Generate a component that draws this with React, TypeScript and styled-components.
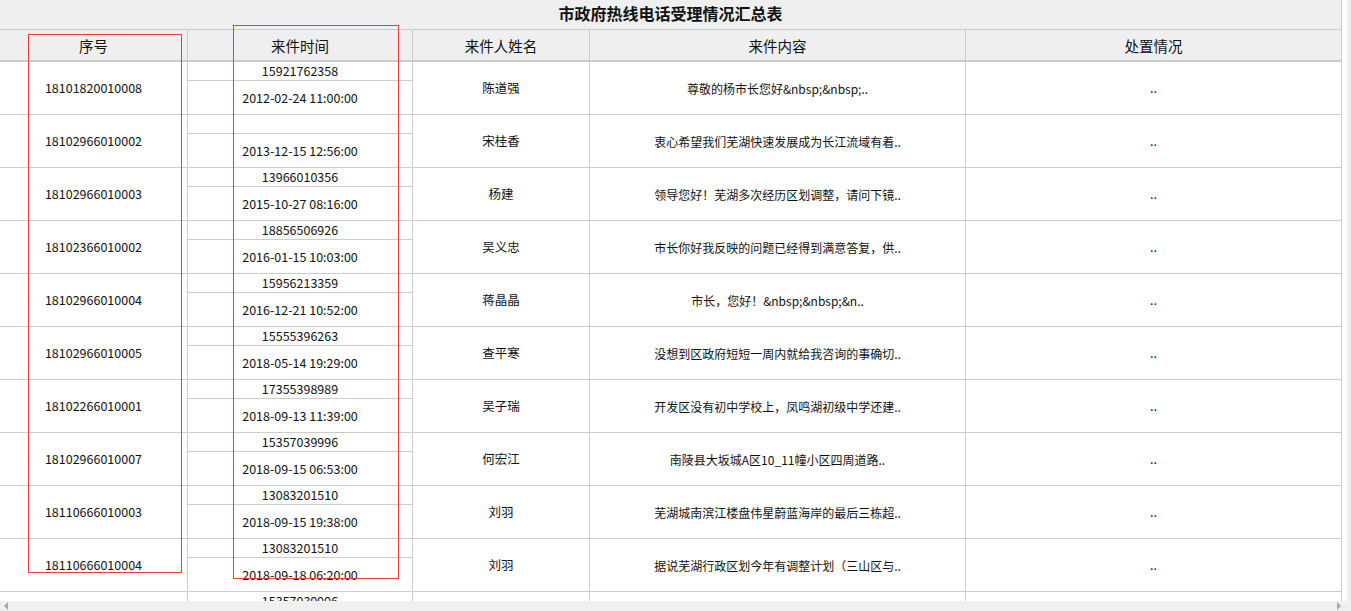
import React from "react";
import styled, { createGlobalStyle } from "styled-components";

const Global = createGlobalStyle`
  *, *::before, *::after { box-sizing: border-box; }
  html, body { margin: 0; padding: 0; background: #fff; overflow: hidden; }
  body { font-family: "Noto Sans CJK SC", "Noto Sans", sans-serif; color: #111; }
`;

const Frame = styled.div`
  position: relative;
  width: 1351px;
  height: 611px;
  display: grid;
  grid-template-columns: 1347px 4px;
  grid-template-rows: 601px 10px;
  overflow: hidden;
`;

const TableArea = styled.div`
  overflow: hidden;
  background: #fff;
`;

const VScroll = styled.div`
  grid-column: 2;
  grid-row: 1 / 3;
  background: #f0f0f0;
`;

const HScroll = styled.div`
  grid-column: 1;
  grid-row: 2;
  background: #f0f0f0;
  display: flex;
  align-items: center;
  justify-content: space-between;
  padding: 0 6px 0 4px;
`;

const Arrow = styled.span<{ $dir: "left" | "right" }>`
  width: 0;
  height: 0;
  border-top: 4px solid transparent;
  border-bottom: 4px solid transparent;
  ${(p) =>
    p.$dir === "left"
      ? "border-right: 4px solid #a8a8a8;"
      : "border-left: 4px solid #a8a8a8;"}
`;

const Table = styled.div`
  width: 1342px;
`;

const TitleBar = styled.div`
  height: 30px;
  background: #efefef;
  border-bottom: 1px solid #cccccc;
  border-right: 1px solid #cccccc;
  display: flex;
  align-items: center;
  justify-content: center;
  padding-bottom: 3px;
  font-size: 16px;
  font-weight: bold;
  line-height: 1;
  color: #111;
`;

const Grid = styled.div`
  display: grid;
  grid-template-columns: 188px 225px 177px 376px 376px;
`;

const HeaderCell = styled.div`
  height: 32px;
  background: #efefef;
  border-right: 1px solid #cccccc;
  border-bottom: 2px solid #cccccc;
  display: flex;
  align-items: center;
  justify-content: center;
  padding-top: 3px;
  font-size: 14.5px;
  line-height: 1;
  color: #111;
`;

const Cell = styled.div<{ $size?: number }>`
  height: 53px;
  border-right: 1px solid #cccccc;
  border-bottom: 1px solid #cccccc;
  display: flex;
  align-items: center;
  justify-content: center;
  padding-top: 1px;
  font-size: ${(p) => p.$size ?? 12.5}px;
  line-height: 1;
  white-space: nowrap;
  overflow: hidden;
`;

const TimeCell = styled.div`
  height: 53px;
  border-right: 1px solid #cccccc;
  display: grid;
  grid-template-rows: 19px 34px;
`;

const SubCell = styled.div`
  border-bottom: 1px solid #cccccc;
  display: flex;
  align-items: center;
  justify-content: center;
  padding-top: 1px;
  font-size: 12.5px;
  line-height: 1;
  white-space: nowrap;
`;

const Mark = styled.div<{ $l: number; $t: number; $w: number; $h: number }>`
  position: absolute;
  left: ${(p) => p.$l}px;
  top: ${(p) => p.$t}px;
  width: ${(p) => p.$w}px;
  height: ${(p) => p.$h}px;
  border: 1px solid #ee3a3a;
  pointer-events: none;
`;

type Row = {
  id: string;
  phone: string;
  time: string;
  name: string;
  content: string;
  status: string;
};

const rows: Row[] = [
  { id: "18101820010008", phone: "15921762358", time: "2012-02-24 11:00:00", name: "陈道强", content: "尊敬的杨市长您好&nbsp;&nbsp;..", status: ".." },
  { id: "18102966010002", phone: "", time: "2013-12-15 12:56:00", name: "宋桂香", content: "衷心希望我们芜湖快速发展成为长江流域有着..", status: ".." },
  { id: "18102966010003", phone: "13966010356", time: "2015-10-27 08:16:00", name: "杨建", content: "领导您好！芜湖多次经历区划调整，请问下镜..", status: ".." },
  { id: "18102366010002", phone: "18856506926", time: "2016-01-15 10:03:00", name: "吴义忠", content: "市长你好我反映的问题已经得到满意答复，供..", status: ".." },
  { id: "18102966010004", phone: "15956213359", time: "2016-12-21 10:52:00", name: "蒋晶晶", content: "市长，您好！&nbsp;&nbsp;&n..", status: ".." },
  { id: "18102966010005", phone: "15555396263", time: "2018-05-14 19:29:00", name: "查平寒", content: "没想到区政府短短一周内就给我咨询的事确切..", status: ".." },
  { id: "18102266010001", phone: "17355398989", time: "2018-09-13 11:39:00", name: "吴子瑞", content: "开发区没有初中学校上，凤鸣湖初级中学还建..", status: ".." },
  { id: "18102966010007", phone: "15357039996", time: "2018-09-15 06:53:00", name: "何宏江", content: "南陵县大坂城A区10_11幢小区四周道路..", status: ".." },
  { id: "18110666010003", phone: "13083201510", time: "2018-09-15 19:38:00", name: "刘羽", content: "芜湖城南滨江楼盘伟星蔚蓝海岸的最后三栋超..", status: ".." },
  { id: "18110666010004", phone: "13083201510", time: "2018-09-18 06:20:00", name: "刘羽", content: "据说芜湖行政区划今年有调整计划（三山区与..", status: ".." },
  { id: "18102966010008", phone: "15357039996", time: "2018-09-19 08:12:00", name: "何宏江", content: "南陵县大坂城A区道路..", status: ".." },
];

const headers = ["序号", "来件时间", "来件人姓名", "来件内容", "处置情况"];

export default function App() {
  return (
    <>
      <Global />
      <Frame>
        <TableArea>
          <Table>
            <TitleBar>市政府热线电话受理情况汇总表</TitleBar>
            <Grid>
              {headers.map((h) => (
                <HeaderCell key={h}>{h}</HeaderCell>
              ))}
              {rows.map((r, i) => (
                <React.Fragment key={i}>
                  <Cell>{r.id}</Cell>
                  <TimeCell>
                    <SubCell>{r.phone}</SubCell>
                    <SubCell>{r.time}</SubCell>
                  </TimeCell>
                  <Cell>{r.name}</Cell>
                  <Cell $size={12}>{r.content}</Cell>
                  <Cell>{r.status}</Cell>
                </React.Fragment>
              ))}
            </Grid>
          </Table>
        </TableArea>
        <VScroll />
        <HScroll>
          <Arrow $dir="left" />
          <Arrow $dir="right" />
        </HScroll>
        <Mark $l={28} $t={34} $w={154} $h={539} />
        <Mark $l={233} $t={25} $w={166} $h={554} />
      </Frame>
    </>
  );
}
